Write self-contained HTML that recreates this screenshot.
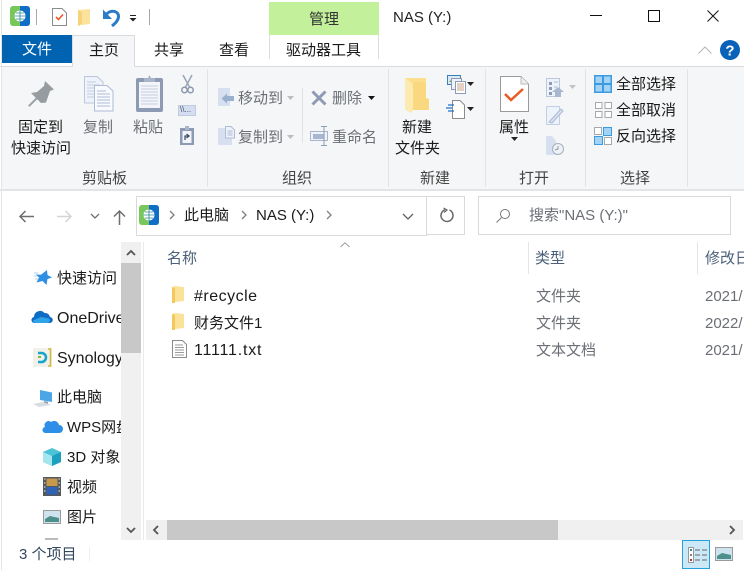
<!DOCTYPE html>
<html><head><meta charset="utf-8"><style>
html,body{margin:0;padding:0;background:#fff}
body{position:relative;width:744px;height:570px;overflow:hidden;font-family:"Liberation Sans","Noto Sans CJK SC",sans-serif;font-size:15px;color:#1a1a1a}
.t{position:absolute;white-space:nowrap;line-height:20px}
.g{color:#6b6f75}
.b{position:absolute}
svg{position:absolute;overflow:visible}
</style></head><body>
<div class="b" style="left:1px;top:67px;width:743px;height:122px;background:#f5f6f7"></div>
<div class="b" style="left:0;top:66px;width:744px;height:1px;background:#dadbdc"></div>
<div class="b" style="left:0;top:189px;width:744px;height:2px;background:#e3e4e5"></div>
<div class="b" style="left:1px;top:0;width:1px;height:570px;background:#e4e5e6"></div>

<!-- quick access -->
<svg style="left:10px;top:6px" width="20" height="20"><rect width="20" height="20" rx="3" fill="#78c75d"/><path d="M10 0H17a3 3 0 0 1 3 3V17a3 3 0 0 1-3 3H10z" fill="#0f6fc6"/><circle cx="10" cy="10" r="5.500" fill="#fff"/><path d="M4.500 10h11M10 4.500v11M6 7h8M6 13h8" stroke="#2a8a9a" stroke-width=".8"/></svg>
<div class="b" style="left:36px;top:9px;width:1px;height:16px;background:#a8a8a8"></div>
<svg style="left:52px;top:8px" width="15" height="18"><path d="M.5.500H10L14.500 5V17.500H.5z" fill="#fff" stroke="#8b8b8b"/><path d="M4 9l2.500 2.500L11 6.500" fill="none" stroke="#e8562a" stroke-width="1.600"/></svg>
<svg style="left:78px;top:9px" width="13" height="17"><path d="M0 1L12 0V15L3 16 0 17z" fill="#fbe39c"/><path d="M0 1L4 3V14L1 17 0 16z" fill="#f6d378"/></svg>
<svg style="left:102px;top:8px" width="18" height="19"><path d="M3.500 7.500C7 1.500 16.500 2 16.500 8.500C16.500 12.500 13 15.500 10 18" fill="none" stroke="#2a7cc7" stroke-width="3"/><path d="M1 1.500V11H10z" fill="#2a7cc7"/></svg>
<svg style="left:129px;top:15px" width="8" height="7"><path d="M1 0.500H7" stroke="#222"/><path d="M.5 3H7.500L4 6.500z" fill="#222"/></svg>
<div class="b" style="left:149px;top:9px;width:1px;height:16px;background:#a8a8a8"></div>

<!-- manage tab -->
<div class="b" style="left:269px;top:2px;width:110px;height:33px;background:#c3f09a"></div>
<div class="t" style="left:309px;top:10px;color:#333">管理</div>
<div class="b" style="left:269px;top:35px;width:1px;height:24px;background:#dcdcdc"></div>
<div class="b" style="left:378px;top:35px;width:1px;height:24px;background:#dcdcdc"></div>
<div class="t" style="left:286px;top:41px">驱动器工具</div>
<div class="t" style="left:393px;top:8px;color:#222;font-size:15px">NAS (Y:)</div>

<!-- window buttons -->
<div class="b" style="left:590px;top:15px;width:12px;height:1px;background:#111"></div>
<div class="b" style="left:648px;top:10px;width:10px;height:10px;border:1px solid #111"></div>
<svg style="left:707px;top:10px" width="12" height="12"><path d="M.5.500L11.500 11.500M11.500.500L.5 11.500" stroke="#111"/></svg>
<svg style="left:698px;top:46px" width="14" height="8"><path d="M.5 7.500L7 1l6.500 6.500" fill="none" stroke="#b5b5b5"/></svg>
<svg style="left:720px;top:40px" width="20" height="20"><circle cx="10" cy="10" r="10" fill="#0a62b8"/><text x="10" y="15.500" font-size="15" font-weight="bold" fill="#fff" text-anchor="middle" font-family="Liberation Sans">?</text></svg>

<!-- tabs -->
<div class="b" style="left:2px;top:35px;width:70px;height:28px;background:#0063b1"></div>
<div class="t" style="left:22px;top:40px;color:#fff">文件</div>
<div class="b" style="left:72px;top:35px;width:63px;height:32px;background:#f5f6f7;border:1px solid #dadbdc;border-bottom:0;box-sizing:border-box"></div>
<div class="t" style="left:89px;top:41px">主页</div>
<div class="t" style="left:154px;top:41px">共享</div>
<div class="t" style="left:219px;top:41px">查看</div>

<!-- group separators -->
<div class="b" style="left:207px;top:69px;width:1px;height:118px;background:#e1e3e6"></div>
<div class="b" style="left:388px;top:69px;width:1px;height:118px;background:#e1e3e6"></div>
<div class="b" style="left:485px;top:69px;width:1px;height:118px;background:#e1e3e6"></div>
<div class="b" style="left:585px;top:69px;width:1px;height:118px;background:#e1e3e6"></div>
<div class="b" style="left:687px;top:69px;width:1px;height:118px;background:#e1e3e6"></div>
<div class="b" style="left:302px;top:88px;width:1px;height:55px;background:#e1e3e6"></div>

<!-- clipboard -->
<svg style="left:28px;top:81px" width="26" height="26"><path d="M.8 25.200L11 15" stroke="#9aa0a4" stroke-width="2"/><path d="M17 0L26 8.500 22 10 18 21.500 13 22 3 12 9 11 16 5z" fill="#969ca0"/></svg>
<div class="t" style="left:18px;top:118px">固定到</div>
<div class="t" style="left:11px;top:139px">快速访问</div>
<svg style="left:84px;top:76px" width="30" height="36"><path d="M.5.500H13L19 6V27H.5z" fill="#eef2fa" stroke="#bcc7dc"/><path d="M3 6h9M3 9h13M3 12h13M3 15h13M3 18h13M3 21h13" stroke="#c5cfe2"/><path d="M10.500 9.500H23L29 15V35H10.500z" fill="#f8faff" stroke="#aebbd4"/><path d="M13 15h9M13 18h13M13 21h13M13 24h13M13 27h13M13 30h13" stroke="#aebbd4"/></svg>
<div class="t g" style="left:83px;top:118px">复制</div>
<svg style="left:136px;top:75px" width="27" height="37"><rect x="0" y="3" width="27" height="34" rx="2" fill="#8d9ab3"/><rect x="3" y="7" width="21" height="26" fill="#f3f5fa"/><path d="M5 11h17M5 14h17M5 17h17M5 20h17M5 23h17M5 26h17M5 29h17" stroke="#c3cde0"/><path d="M8 7V3h4l1.500-3 1.500 3h4V7z" fill="#a9b4c9"/></svg>
<div class="t g" style="left:133px;top:118px">粘贴</div>
<svg style="left:181px;top:75px" width="13" height="19"><path d="M2 0L9 13M11 0L4 13" stroke="#9aa5b8" stroke-width="1.500"/><circle cx="3.500" cy="15" r="2.700" fill="none" stroke="#8b98ae" stroke-width="1.500"/><circle cx="9.500" cy="15" r="2.700" fill="none" stroke="#8b98ae" stroke-width="1.500"/></svg>
<div class="b" style="left:178px;top:105px;width:16px;height:9px;background:#d4def0;border:1px solid #c1cbdd"></div>
<div class="t" style="left:180px;top:104px;font-size:8px;line-height:11px;color:#44506a">\\...</div>
<svg style="left:180px;top:126px" width="14" height="19"><rect y="2" width="14" height="17" fill="#8d9ab3"/><rect x="2.500" y="5" width="9" height="12" fill="#f3f5fa"/><path d="M5 0h4v4H5z" fill="#a9b4c9"/><path d="M5 14V10h3M6.500 8l2.500 2-2.500 2" fill="none" stroke="#3d4f70" stroke-width="1.300"/></svg>
<div class="t" style="left:82px;top:169px;color:#444">剪贴板</div>

<!-- organize -->
<svg style="left:218px;top:88px" width="17" height="18"><rect width="12" height="18" fill="#d6e0f1"/><path d="M16 8H9V5.500L3.500 10.500 9 15.500V13H16z" fill="#9ab0cd"/></svg>
<div class="t g" style="left:238px;top:89px">移动到</div>
<svg style="left:287px;top:96px" width="7" height="4"><path d="M0 0H7L3.500 4z" fill="#bdbdbd"/></svg>
<svg style="left:311px;top:90px" width="16" height="16"><path d="M1.500 1.500L14.500 14.500M14.500 1.500L1.500 14.500" stroke="#8d9bb5" stroke-width="3"/></svg>
<div class="t g" style="left:332px;top:89px">删除</div>
<svg style="left:368px;top:96px" width="7" height="4"><path d="M0 0H7L3.500 4z" fill="#111"/></svg>
<svg style="left:218px;top:126px" width="17" height="19"><rect y="2" width="14" height="17" fill="#d6e0f1"/><path d="M7.500.500H13L16.500 4V12H7.500z" fill="#eef2fa" stroke="#aebbd4"/><path d="M9.500 5h5M9.500 7h5M9.500 9h5" stroke="#aebbd4"/></svg>
<div class="t g" style="left:238px;top:128px">复制到</div>
<svg style="left:287px;top:135px" width="7" height="4"><path d="M0 0H7L3.500 4z" fill="#bdbdbd"/></svg>
<svg style="left:310px;top:126px" width="19" height="20"><rect x=".5" y="5.500" width="17" height="9" fill="#eef2fa" stroke="#a9b6cd"/><rect x="3" y="8" width="11" height="5" fill="#a8b6d0"/><path d="M11 .5H17M14 .5V19.500M11 19.500H17" stroke="#8d9bb5" fill="none"/></svg>
<div class="t g" style="left:332px;top:128px">重命名</div>
<div class="t" style="left:282px;top:169px;color:#444">组织</div>

<!-- new -->
<svg style="left:405px;top:78px" width="25" height="35"><path d="M0 0H21V20L24 21V32H8L6 35 0 31z" fill="#fbdf8d"/><path d="M8 4H21V20L24 21V32H8z" fill="#f9d87f"/><path d="M0 0L8 6V31L6 35 0 31z" fill="#fdeab0"/></svg>
<div class="t" style="left:402px;top:118px">新建</div>
<div class="t" style="left:395px;top:139px">文件夹</div>
<svg style="left:447px;top:75px" width="19" height="19"><rect x=".5" y=".5" width="13" height="9" fill="#dbe8f6" stroke="#3a80b8"/><path d="M2 7L5 4 8 7z" fill="#6aa84f"/><rect x="4.500" y="3.500" width="10" height="11" fill="#eef2fa" stroke="#8d9ab3"/><rect x="8.500" y="6.500" width="10" height="12" fill="#fff" stroke="#8d9ab3"/><path d="M10 9h7M10 11h7M10 13h7M10 15h7" stroke="#c9a08a"/></svg>
<svg style="left:467px;top:82px" width="7" height="4"><path d="M0 0H7L3.500 4z" fill="#222"/></svg>
<svg style="left:446px;top:100px" width="19" height="19"><path d="M6.500.500H14L18.500 5V18.500H6.500z" fill="#fff" stroke="#8b8b8b"/><path d="M2 5H8M0 8H6M2 11H8" stroke="#1e73c8" stroke-width="1.200"/></svg>
<svg style="left:467px;top:107px" width="7" height="4"><path d="M0 0H7L3.500 4z" fill="#222"/></svg>
<div class="t" style="left:420px;top:169px;color:#444">新建</div>

<!-- open -->
<svg style="left:500px;top:76px" width="29" height="36"><path d="M.5.500H21L28.500 8V35.500H.5z" fill="#fff" stroke="#9a9a9a"/><path d="M21 .5V8H28.500" fill="#eee" stroke="#bbb"/><path d="M5 18l6 6 12-11" fill="none" stroke="#ea5a24" stroke-width="2.500"/></svg>
<div class="t" style="left:499px;top:118px">属性</div>
<svg style="left:511px;top:137px" width="7" height="4"><path d="M0 0H7L3.500 4z" fill="#222"/></svg>
<svg style="left:546px;top:78px" width="20" height="20"><rect x=".5" y=".5" width="13" height="18" fill="#eef2fa" stroke="#bcc7dc"/><path d="M3 4h3v3H3zM3 9h3v3H3zM3 14h3v3H3z" fill="#8d9bb5"/><path d="M8 4h4M8 9h3" stroke="#aebbd4"/><path d="M12 9l6 5h-3v5h-6v-5H6z" fill="#a8b6d0"/></svg>
<svg style="left:569px;top:85px" width="7" height="4"><path d="M0 0H7L3.500 4z" fill="#c3c3c3"/></svg>
<svg style="left:546px;top:106px" width="18" height="19"><rect x=".5" y=".5" width="13" height="18" fill="#eef2fa" stroke="#c5cfe2"/><path d="M3 16L15 3l2 2L6 17z" fill="#d6e0f1" stroke="#aebbd4"/></svg>
<svg style="left:546px;top:136px" width="18" height="20"><path d="M0 0H6L10 5V19H0z" fill="#d6e0f1"/><circle cx="12" cy="13" r="5.500" fill="#eef2f7" stroke="#a5aebc"/><path d="M12 10v3l-3 1" fill="none" stroke="#8d96a6"/></svg>
<div class="t" style="left:519px;top:169px;color:#444">打开</div>

<!-- select -->
<svg style="left:594px;top:75px" width="18" height="18"><rect width="18" height="18" fill="#3b9be0"/><rect x="1.500" y="1.500" width="6.500" height="6.500" fill="#a3d2f3"/><rect x="10" y="1.500" width="6.500" height="6.500" fill="#a3d2f3"/><rect x="1.500" y="10" width="6.500" height="6.500" fill="#a3d2f3"/><rect x="10" y="10" width="6.500" height="6.500" fill="#a3d2f3"/></svg>
<div class="t" style="left:616px;top:75px">全部选择</div>
<svg style="left:595px;top:102px" width="17" height="16"><path d="M.5.500h6.500v6h-6.500zM10 .5h6.500v6H10zM.5 9.500h6.500v6h-6.500zM10 9.500h6.500v6H10z" fill="#fff" stroke="#a8a8a8"/></svg>
<div class="t" style="left:616px;top:101px">全部取消</div>
<svg style="left:594px;top:127px" width="18" height="18"><path d="M.5.500h7v7h-7zM10.500 10.500h7v7h-7z" fill="#fff" stroke="#a8a8a8"/><rect x="9.500" y=".5" width="8" height="8" fill="#a3d2f3" stroke="#3b9be0"/><rect x=".5" y="9.500" width="8" height="8" fill="#a3d2f3" stroke="#3b9be0"/></svg>
<div class="t" style="left:616px;top:127px">反向选择</div>
<div class="t" style="left:620px;top:169px;color:#444">选择</div>

<!-- nav -->
<svg style="left:18px;top:210px" width="16" height="13"><path d="M16 6.500H2M7.500 1L2 6.500 7.500 12" fill="none" stroke="#6e6e6e" stroke-width="1.500"/></svg>
<svg style="left:57px;top:210px" width="16" height="13"><path d="M0 6.500H14M8.500 1L14 6.500 8.500 12" fill="none" stroke="#d4d4d4" stroke-width="1.500"/></svg>
<svg style="left:90px;top:213px" width="10" height="7"><path d="M1 1l4 4 4-4" fill="none" stroke="#707070" stroke-width="1.300"/></svg>
<svg style="left:113px;top:209px" width="13" height="16"><path d="M6.500 16V2M1 7.500L6.500 2 12 7.500" fill="none" stroke="#6e6e6e" stroke-width="1.500"/></svg>
<div class="b" style="left:136px;top:196px;width:290px;height:38px;border:1px solid #d9d9d9;border-right:0"></div>
<div class="b" style="left:426px;top:196px;width:39px;height:39px;border:1px solid #d9d9d9;box-sizing:border-box"></div>
<div class="b" style="left:478px;top:196px;width:253px;height:39px;border:1px solid #d9d9d9;box-sizing:border-box"></div>
<svg style="left:139px;top:205px" width="20" height="20"><rect width="20" height="20" rx="3" fill="#78c75d"/><path d="M10 0H17a3 3 0 0 1 3 3V17a3 3 0 0 1-3 3H10z" fill="#0f6fc6"/><circle cx="10" cy="10" r="5.500" fill="#fff"/><path d="M4.500 10h11M10 4.500v11M6 7h8M6 13h8" stroke="#2a8a9a" stroke-width=".8"/></svg>
<svg style="left:169px;top:210px" width="6" height="10"><path d="M1 1l4 4-4 4" fill="none" stroke="#808080" stroke-width="1.300"/></svg>
<div class="t" style="left:184px;top:206px">此电脑</div>
<svg style="left:241px;top:210px" width="6" height="10"><path d="M1 1l4 4-4 4" fill="none" stroke="#808080" stroke-width="1.300"/></svg>
<div class="t" style="left:256px;top:206px">NAS (Y:)</div>
<svg style="left:326px;top:210px" width="6" height="10"><path d="M1 1l4 4-4 4" fill="none" stroke="#808080" stroke-width="1.300"/></svg>
<svg style="left:402px;top:213px" width="12" height="8"><path d="M1 1l5 5 5-5" fill="none" stroke="#606060" stroke-width="1.300"/></svg>
<svg style="left:440px;top:208px" width="14" height="15"><path d="M5 1.800A6 6 0 1 0 9.500 2" fill="none" stroke="#666" stroke-width="1.500"/><path d="M3.500 0L7 2 4 4.500" fill="none" stroke="#666" stroke-width="1.200"/></svg>
<svg style="left:496px;top:208px" width="15" height="15"><circle cx="9" cy="6" r="4.500" fill="none" stroke="#777"/><path d="M5.500 9.500L.5 14.500" stroke="#777"/></svg>
<div class="t g" style="left:529px;top:206px">搜索"NAS (Y:)"</div>

<!-- sidebar -->
<div class="b" style="left:121px;top:242px;width:20px;height:298px;background:#f0f0f0"></div>
<div class="b" style="left:121px;top:263px;width:20px;height:90px;background:#c8c8c8"></div>
<svg style="left:126px;top:249px" width="10" height="7"><path d="M1 6l4-4 4 4" fill="none" stroke="#555" stroke-width="1.800"/></svg>
<svg style="left:126px;top:527px" width="10" height="7"><path d="M1 1l4 4 4-4" fill="none" stroke="#555" stroke-width="1.800"/></svg>
<div class="b" style="left:143px;top:242px;width:1px;height:298px;background:#eaeaea"></div>
<svg style="left:34px;top:270px" width="18" height="16"><path d="M13 0l.5 5 4.500 2.500-4.500 1.500-1 6-4-4-6 1.500 2.500-5-3-3 5 .2z" fill="#2f8fe4"/><path d="M0 3h4M0 6h3M1 9h3" stroke="#a9d0f0"/></svg>
<div class="t" style="left:57px;top:269px">快速访问</div>
<svg style="left:32px;top:310px" width="20" height="13"><path d="M3 13a3 3 0 0 1-1-6 6 6 0 0 1 10.500-4 5 5 0 0 1 5.500 4 3 3 0 0 1-.5 6z" fill="#0f6cc4"/><path d="M3 13a3 3 0 0 1-2-2.500L9 7l8 1.500a3 3 0 0 1-.5 4.500z" fill="#2ea3e8"/></svg>
<div class="t" style="left:57px;top:309px;width:64px;overflow:hidden;font-size:16px">OneDrive</div>
<svg style="left:33px;top:348px" width="19" height="19"><rect width="19" height="19" fill="#f1f1ea"/><path d="M5 5h3.500a4.500 4.500 0 0 1 0 9H5" fill="none" stroke="#16a5c9" stroke-width="2.500"/><path d="M5 9h3" stroke="#7dbb42" stroke-width="2"/><path d="M15 1h2.500v17H15" fill="none" stroke="#d6b838" stroke-width="1.500"/></svg>
<div class="t" style="left:57px;top:349px;width:64px;overflow:hidden;font-size:16px">Synology</div>
<svg style="left:33px;top:390px" width="20" height="17"><path d="M7 0L19 2.500V12L7 10z" fill="#4aa6e6"/><path d="M11 11l4 .8V14l-4-1z" fill="#8aa0b0"/><path d="M0 14L10 12 18 15 6 17z" fill="#d8dde2"/></svg>
<div class="t" style="left:57px;top:388px">此电脑</div>
<svg style="left:43px;top:419px" width="19" height="14"><path d="M3 14a3 3 0 0 1-1-6 4 4 0 0 1 6-5 5 5 0 0 1 8 3 4 4 0 0 1 0 8z" fill="#2e8fe8"/></svg>
<div class="t" style="left:67px;top:418px;width:54px;overflow:hidden">WPS网盘</div>
<svg style="left:43px;top:448px" width="18" height="18"><path d="M9 0L18 4V14L9 18 0 14V4z" fill="#4cc3d6"/><path d="M0 4L9 8V18L0 14z" fill="#a4e6ee"/><path d="M9 8L18 4V14L9 18z" fill="#1d9fc0"/></svg>
<div class="t" style="left:67px;top:448px;width:54px;overflow:hidden">3D 对象</div>
<svg style="left:43px;top:477px" width="18" height="19"><rect width="18" height="19" fill="#55585c"/><rect x="3.500" y="1.500" width="11" height="7.500" fill="#c69a4a"/><rect x="3.500" y="10" width="11" height="7.500" fill="#2f63b8"/><path d="M1 2h1.500M1 6h1.500M1 10h1.500M1 14h1.500M15.500 2H17M15.500 6H17M15.500 10H17M15.500 14H17" stroke="#eee"/></svg>
<div class="t" style="left:67px;top:478px">视频</div>
<svg style="left:43px;top:510px" width="18" height="14"><rect x=".5" y=".5" width="17" height="13" fill="#cfe3ef" stroke="#9a9a9a"/><path d="M2 9L7 6 16 8V12H2z" fill="#4d8f8a"/></svg>
<div class="t" style="left:67px;top:508px">图片</div>
<div class="b" style="left:45px;top:538px;width:13px;height:2px;background:#bbb"></div>

<!-- header -->
<svg style="left:340px;top:242px" width="10" height="6"><path d="M.5 5L5 .8 9.500 5" fill="none" stroke="#9a9a9a"/></svg>
<div class="t" style="left:167px;top:249px;color:#4c607a">名称</div>
<div class="b" style="left:528px;top:242px;width:1px;height:32px;background:#e5e5e5"></div>
<div class="t" style="left:535px;top:249px;color:#4c607a">类型</div>
<div class="b" style="left:697px;top:242px;width:1px;height:32px;background:#e5e5e5"></div>
<div class="t" style="left:705px;top:249px;color:#4c607a;width:39px;overflow:hidden">修改日期</div>

<!-- rows -->
<svg style="left:172px;top:286px" width="13" height="17"><path d="M0 1L3 0 12 1V15L3 16 0 17z" fill="#fbe29a"/><path d="M0 1L3 2V17L0 17z" fill="#f4c95c"/></svg>
<div class="t" style="left:194px;top:287px;font-size:16px;letter-spacing:.5px">#recycle</div>
<div class="t g" style="left:536px;top:287px">文件夹</div>
<div class="t g" style="left:705px;top:287px;width:39px;overflow:hidden">2021/</div>
<svg style="left:172px;top:313px" width="13" height="17"><path d="M0 1L3 0 12 1V15L3 16 0 17z" fill="#fbe29a"/><path d="M0 1L3 2V17L0 17z" fill="#f4c95c"/></svg>
<div class="t" style="left:194px;top:314px">财务文件1</div>
<div class="t g" style="left:536px;top:314px">文件夹</div>
<div class="t g" style="left:705px;top:314px;width:39px;overflow:hidden">2022/</div>
<svg style="left:172px;top:340px" width="15" height="18"><path d="M.5.500H10.500L14.500 4.500V17.500H.5z" fill="#fff" stroke="#8a8a8a"/><path d="M3 5h8M3 7.500h9M3 10h9M3 12.500h9M3 15h9" stroke="#9a9a9a"/></svg>
<div class="t" style="left:194px;top:341px;font-size:16px;letter-spacing:.8px">11111.txt</div>
<div class="t g" style="left:536px;top:341px">文本文档</div>
<div class="t g" style="left:705px;top:341px;width:39px;overflow:hidden">2021/</div>

<!-- h scrollbar -->
<div class="b" style="left:146px;top:520px;width:597px;height:20px;background:#f0f0f0"></div>
<div class="b" style="left:167px;top:520px;width:391px;height:20px;background:#c8c8c8"></div>
<svg style="left:152px;top:525px" width="7" height="10"><path d="M6 1L2 5l4 4" fill="none" stroke="#555" stroke-width="1.800"/></svg>
<svg style="left:729px;top:525px" width="7" height="10"><path d="M1 1l4 4-4 4" fill="none" stroke="#555" stroke-width="1.800"/></svg>

<!-- status -->
<div class="t" style="left:19px;top:545px;color:#33475e;font-size:15px">3 个项目</div>
<div class="b" style="left:89px;top:547px;width:1px;height:14px;background:#eee"></div>
<div class="b" style="left:682px;top:540px;width:28px;height:29px;background:#cce8f7;border:1px solid #26a0da;box-sizing:border-box"></div>
<svg style="left:688px;top:547px" width="19" height="16"><rect x=".5" y=".5" width="5" height="15" fill="#fff" stroke="#999"/><rect x="2" y="2" width="2" height="2" fill="#3a8a9a"/><rect x="2" y="7" width="2" height="2" fill="#888"/><rect x="2" y="12" width="2" height="2" fill="#c33"/><path d="M7 3h5M14 3h5M7 8h5M14 8h5M7 13h5M14 13h5" stroke="#666"/></svg>
<svg style="left:715px;top:547px" width="18" height="14"><rect x=".5" y=".5" width="17" height="13" fill="#cfe3ef" stroke="#9a9a9a"/><path d="M2 9L7 6 16 8V12H2z" fill="#4d8f8a"/></svg>
</body></html>
